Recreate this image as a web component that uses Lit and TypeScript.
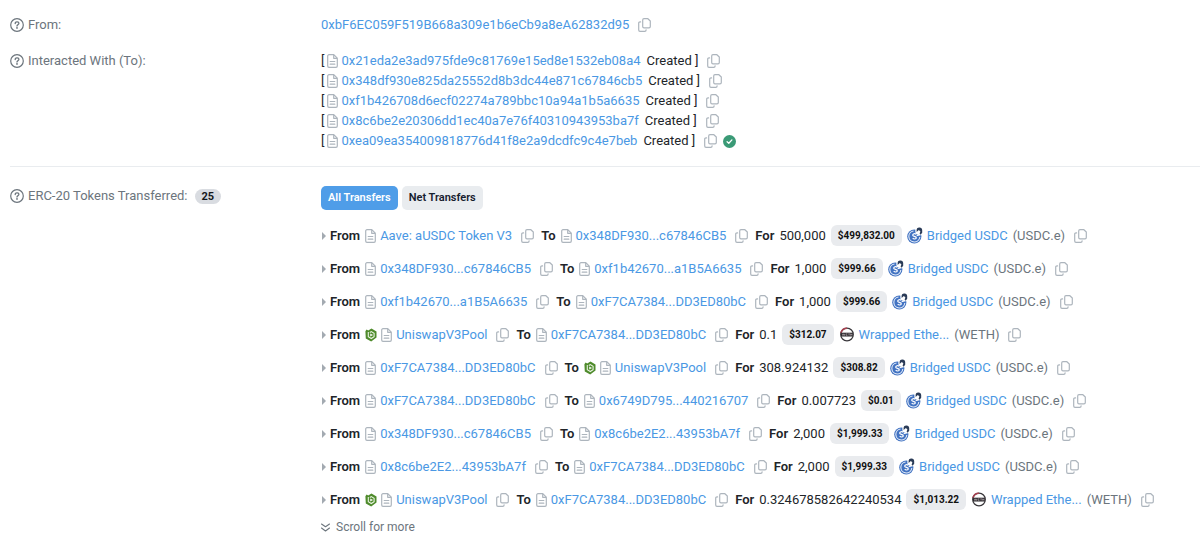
import { LitElement, html, css, nothing } from "lit";
import { customElement } from "lit/decorators.js";

type Party = { name: string; pool?: boolean };
type Transfer = { from: Party; to: Party; amount: string; value: string; token: "usdc" | "weth" };

const help = html`<svg class="help" viewBox="0 0 14 14" aria-hidden="true">
  <circle cx="7" cy="7" r="6.3" fill="none" stroke="currentColor" stroke-width="1.2" />
  <path d="M5.2 5.5C5.2 4.5 5.9 3.9 6.9 3.9h.4c.9 0 1.6.6 1.6 1.4 0 .7-.4 1-.9 1.3-.6.4-1 .6-1 1.4" fill="none" stroke="currentColor" stroke-width="1.3" stroke-linecap="round" />
  <circle cx="7" cy="9.9" r=".9" fill="currentColor" />
</svg>`;

const doc = html`<svg class="doc" viewBox="0 0 11 14" aria-hidden="true">
  <path d="M2 .7h4.800l3.500 3.500V12a1.300 1.300 0 0 1-1.300 1.300H2A1.300 1.300 0 0 1 .7 12V2A1.300 1.300 0 0 1 2 .7zM6.700.8v3.500h3.500M3.200 7.500h4.600M3.200 10.200h4.600" fill="none" stroke="currentColor" stroke-width="1.200" stroke-linejoin="round" stroke-linecap="round" />
</svg>`;

const copyIcon = html`<svg class="copy" viewBox="0 0 13 14" aria-hidden="true">
  <path d="M6 .7h3.900l2.400 2.300v5.500a1.300 1.300 0 0 1-1.300 1.300H6a1.300 1.300 0 0 1-1.300-1.300V2A1.300 1.300 0 0 1 6 .7zM2.600 3.900H2A1.300 1.300 0 0 0 .7 5.200V12A1.300 1.300 0 0 0 2 13.300h4.800A1.300 1.300 0 0 0 8.100 12v-.2" fill="none" stroke="currentColor" stroke-width="1.200" stroke-linejoin="round" stroke-linecap="round" />
</svg>`;

const copy = html`<button class="copybtn" aria-label="Copy">${copyIcon}</button>`;

const pool = html`<svg class="pool" viewBox="0 0 12 14" aria-hidden="true">
  <path d="M.4 3.200 1.600 1.600 3.200 2.400 6.500.4l5 3.200v5.800L6.200 13.400.8 10.400z" fill="#4f8b2c" />
  <path d="M3.300 4v4.800l3 1.700 2.800-1.900V5.300L6.300 3.600 4.800 4.500" fill="none" stroke="#eaf4e3" stroke-width="1.100" />
  <path d="m5.200 5.500 2.900 1.400-2.900 1.700z" fill="#f2f8ee" />
</svg>`;

const usdc = html`<svg class="coin" viewBox="0 0 16 17" aria-hidden="true">
  <circle cx="7.300" cy="9.500" r="7.100" fill="#4273c2" />
  <path d="M6.500 4A5.500 5.500 0 1 0 12.800 10" fill="none" stroke="#e6eefa" stroke-width="1.100" />
  <path d="M9.300 7.200C8 6 5.600 6.700 5.700 8.300c.1 1.500 3.500.8 3.600 2.500 0 1.500-2.600 1.600-3.600.3" fill="none" stroke="#fff" stroke-width="1.200" />
  <path d="m9.500 8.800 5-1.300" stroke="#fff" stroke-width="1" />
  <circle cx="12.200" cy="4" r="3.900" fill="#fff" />
  <path d="M9.600 5V3.500a2.800 2.800 0 0 1 5.600-.3v2.500l-1.600 2-1-1.100.8-2.200-1.500-1.500-1.200 1.200z" fill="#2b3c58" />
</svg>`;

const weth = html`<svg class="coin" viewBox="0 0 16 17" aria-hidden="true">
  <circle cx="8" cy="8.500" r="6.300" fill="#fff" stroke="#3a383c" stroke-width="1.300" />
  <path d="M1.900 7A6.300 6.300 0 0 1 8 2.200" fill="none" stroke="#a8404f" stroke-width="1.400" />
  <rect x="2" y="6.700" width="12" height="3.800" fill="#2b292d" />
  <path d="m3.300 7.700.6 1.800.7-1.700.7 1.700.6-1.800M8.500 7.800H7.100v1.600h1.400M9.300 7.800h1.600M10.100 7.800v1.800M11.600 7.600v2M13 7.600v2M11.600 8.600H13" fill="none" stroke="#d9cdd0" stroke-width=".5" />
</svg>`;

const created = [
  "0x21eda2e3ad975fde9c81769e15ed8e1532eb08a4",
  "0x348df930e825da25552d8b3dc44e871c67846cb5",
  "0xf1b426708d6ecf02274a789bbc10a94a1b5a6635",
  "0x8c6be2e20306dd1ec40a7e76f40310943953ba7f",
  "0xea09ea354009818776d41f8e2a9dcdfc9c4e7beb",
];

const A348: Party = { name: "0x348DF930...c67846CB5" };
const AF1B: Party = { name: "0xf1b42670...a1B5A6635" };
const AF7C: Party = { name: "0xF7CA7384...DD3ED80bC" };
const A8C6: Party = { name: "0x8c6be2E2...43953bA7f" };
const POOL: Party = { name: "UniswapV3Pool", pool: true };

const transfers: Transfer[] = [
  { from: { name: "Aave: aUSDC Token V3" }, to: A348, amount: "500,000", value: "$499,832.00", token: "usdc" },
  { from: A348, to: AF1B, amount: "1,000", value: "$999.66", token: "usdc" },
  { from: AF1B, to: AF7C, amount: "1,000", value: "$999.66", token: "usdc" },
  { from: POOL, to: AF7C, amount: "0.1", value: "$312.07", token: "weth" },
  { from: AF7C, to: POOL, amount: "308.924132", value: "$308.82", token: "usdc" },
  { from: AF7C, to: { name: "0x6749D795...440216707" }, amount: "0.007723", value: "$0.01", token: "usdc" },
  { from: A348, to: A8C6, amount: "2,000", value: "$1,999.33", token: "usdc" },
  { from: A8C6, to: AF7C, amount: "2,000", value: "$1,999.33", token: "usdc" },
  { from: POOL, to: AF7C, amount: "0.324678582642240534", value: "$1,013.22", token: "weth" },
];

const party = (p: Party) => html`<span class="party">${p.pool ? pool : nothing}${doc}<a href="#">${p.name}</a></span>${copy}`;

@customElement("app-root")
export class AppRoot extends LitElement {
  static styles = css`
    :host { display: block; background: #fff; color: #212529; font: 13px/20px Roboto, "Liberation Sans", sans-serif; }
    * { box-sizing: border-box; }
    svg { display: block; flex: none; }
    a { color: #4a98e4; text-decoration: none; }
    button { font: inherit; border: 0; margin: 0; padding: 0; background: none; cursor: pointer; }
    .row { display: grid; grid-template-columns: 311px 1fr; }
    .overview { margin-left: 10px; padding: 15px 0; border-bottom: 1px solid #e9ecef; display: grid; gap: 16px; }
    .tokens { margin-left: 10px; padding-top: 19px; }
    .label { display: flex; align-items: center; align-self: start; gap: 4px; color: #6c757d; }
    .help { width: 14px; height: 14px; }
    .count { background: #d9dce1; color: #16191d; font-weight: 700; font-size: 11px; line-height: 15px; border-radius: 8px; padding: 0 7px; margin-left: 3px; }
    .line { display: flex; align-items: center; white-space: nowrap; }
    .doc { width: 11px; height: 14px; color: #adb5bd; }
    .copy { width: 13px; height: 14px; }
    .copybtn { color: #adb5bd; margin-left: 9px; }
    .made { gap: 3px; }
    .made a { margin-right: 3px; }
    .made .copybtn { margin-left: 6px; }
    .check { width: 13px; height: 13px; margin-left: 3px; }
    .tabs { display: flex; gap: 4px; }
    .tab { height: 24px; padding: 0 7px; border-radius: 5px; font-size: 11px; font-weight: 600; background: #e9ecef; color: #16202e; }
    .tab.on { background: #4f9de8; color: #fff; }
    .list { list-style: none; margin: 9px 0 0; padding: 0; }
    .item { height: 33px; display: flex; align-items: center; white-space: nowrap; padding-left: 1px; }
    .tri { width: 4px; height: 8px; margin-right: 4px; }
    .key { font-weight: 600; margin-right: 5px; }
    .key.next { margin-left: 7px; }
    .party { display: flex; align-items: center; gap: 4px; }
    .pool { width: 12px; height: 14px; }
    .value { background: #e9ebee; color: #111; font-size: 10px; font-weight: 700; line-height: 21px; border-radius: 6px; padding: 0 7px; margin: 0 5px; }
    .coin { width: 16px; height: 17px; margin-right: 4px; }
    .sym { color: #6c757d; margin-left: 5px; }
    .more { display: flex; align-items: center; gap: 6px; color: #6c757d; font-size: 12px; line-height: 22px; }
    .chev { width: 9px; height: 9px; }
  `;

  render() {
    return html`
      <section class="overview">
        <div class="row">
          <div class="label">${help}<span>From:</span></div>
          <div class="line"><a href="#">0xbF6EC059F519B668a309e1b6eCb9a8eA62832d95</a>${copy}</div>
        </div>
        <div class="row">
          <div class="label">${help}<span>Interacted With (To):</span></div>
          <div>
            ${created.map((a, i) => html`<div class="line made"><span>[</span>${doc}<a href="#">${a}</a><span>Created ]</span>${copy}${i === 4
              ? html`<svg class="check" viewBox="0 0 13 13" role="img" aria-label="Success"><circle cx="6.500" cy="6.500" r="6.500" fill="#3a9a76" /><path d="m4.100 6.700 1.700 1.600 3.100-3.400" fill="none" stroke="#fff" stroke-width="1.300" stroke-linecap="round" stroke-linejoin="round" /></svg>`
              : nothing}</div>`)}
          </div>
        </div>
      </section>
      <section class="tokens row">
        <div class="label">${help}<span>ERC-20 Tokens Transferred:</span><span class="count">25</span></div>
        <div>
          <div class="tabs"><button class="tab on">All Transfers</button><button class="tab">Net Transfers</button></div>
          <ul class="list">
            ${transfers.map((t) => html`<li class="item">
              <svg class="tri" viewBox="0 0 4 8" aria-hidden="true"><path d="M0 0 4 4 0 8z" fill="#a3aab1" /></svg>
              <span class="key">From</span>${party(t.from)}
              <span class="key next">To</span>${party(t.to)}
              <span class="key next">For</span><span>${t.amount}</span><span class="value">${t.value}</span>
              ${t.token === "usdc" ? usdc : weth}
              <a href="#">${t.token === "usdc" ? "Bridged USDC" : "Wrapped Ethe..."}</a><span class="sym">${t.token === "usdc" ? "(USDC.e)" : "(WETH)"}</span>${copy}
            </li>`)}
          </ul>
          <div class="more"><svg class="chev" viewBox="0 0 9 9" aria-hidden="true"><path d="m.5 1 4 2.800 4-2.800M.5 5l4 3 4-3" fill="none" stroke="currentColor" stroke-width="1.100" stroke-linecap="round" stroke-linejoin="round" /></svg><span>Scroll for more</span></div>
        </div>
      </section>`;
  }
}
